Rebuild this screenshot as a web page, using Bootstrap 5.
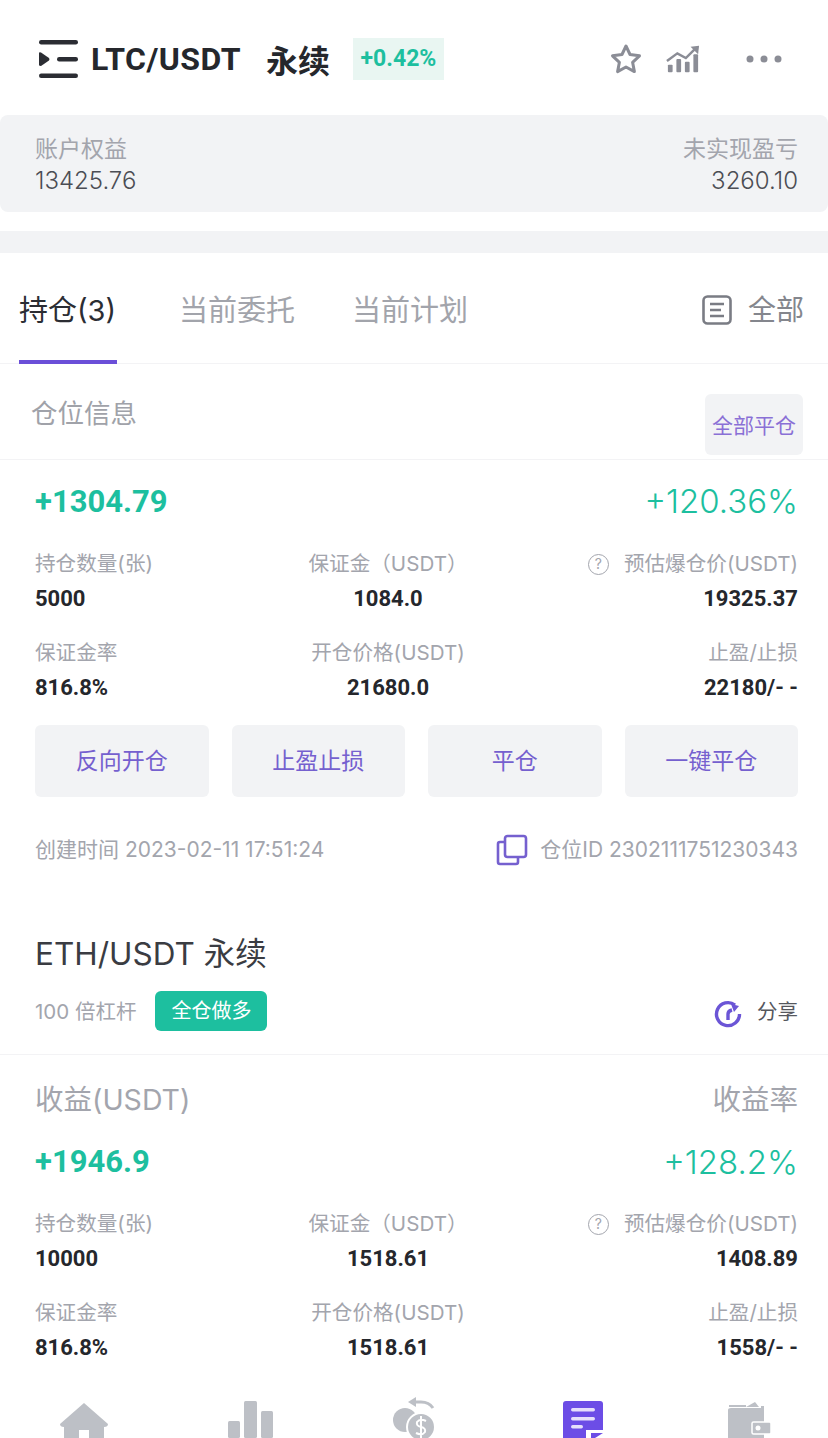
<!DOCTYPE html>
<html lang="zh-CN">
<head>
    <meta charset="UTF-8">
    <title>持仓 - LTC/USDT 永续</title>
    <link href="https://cdn.jsdelivr.net/npm/bootstrap@5.3.0/dist/css/bootstrap.min.css" rel="stylesheet">
    <style>
        html, body { height: 100%; overflow: hidden; }
        body { font-family: Inter, "Noto Sans CJK SC", sans-serif; background: #fff; color: #2b2d33; }
        .cjk { font-family: "Noto Sans CJK SC", sans-serif; }
        .top-bar { height: 115px; padding: 3px 46px 0 39px; }
        .pair-name { font-family: Roboto, "Noto Sans CJK SC", sans-serif; font-weight: 700; font-size: 32px; letter-spacing: .45px; color: #25272c; margin-left: 13px; white-space: nowrap; }
        .pair-type { font-weight: 700; font-size: 32px; color: #25272c; margin-left: 25px; }
        .pct-tag { background: #e9f6f2; color: #1dbf9f; font-family: Roboto, sans-serif; font-weight: 700; font-size: 23px; height: 42px; width: 91px; margin-left: 23px; }
        .top-icons { margin-left: auto; }
        .equity-box { height: 97px; background: #f2f3f5; border-radius: 8px; padding: 18px 30px 0 35px; }
        .equity-label { font-size: 23px; line-height: 32px; color: #a3a5ad; }
        .equity-val { font-size: 24px; line-height: 32px; color: #4b4d54; font-weight: 300; }
        .spacer-strip { height: 22px; margin-top: 19px; background: #f2f3f5; }
        .tab-row { height: 111px; border-bottom: 1px solid #f3f3f5; padding: 0 24px 0 19px; }
        .tab-item { font-size: 29px; color: #a2a4ab; height: 111px; line-height: 115px; white-space: nowrap; }
        .tab-item.on { color: #2b2d33; border-bottom: 4px solid #6b4fd8; width: 98px; }
        .tab-all { font-size: 28px; color: #84868d; margin-left: auto; padding-top: 3px; }
        .sec-head { height: 96px; border-bottom: 1px solid #f3f3f5; padding: 0 25px 0 31px; }
        .sec-title { font-size: 26.5px; color: #a0a2a9; line-height: 98px; }
        .close-all { width: 98px; height: 61px; margin-top: 30px; background: #f2f3f5; border-radius: 6px; border: 0; padding: 2px 0 0; font-size: 21px; line-height: 59px; color: #8a70d6; white-space: nowrap; }
        .pos-body { padding: 0 30px 0 35px; }
        .pnl-row { height: 86px; padding-bottom: 2px; }
        .pnl-row.second-pnl { height: 67px; padding-bottom: 20px; }
        .pnl-val { font-family: Roboto, sans-serif; font-weight: 700; font-size: 31px; color: #1dbf9f; }
        .pnl-pct { font-size: 33px; font-weight: 300; color: #1dbf9f; }
        .data-grid { display: grid; grid-template-columns: 236px 234px 1fr; }
        .data-cell { height: 89px; }
        .data-label { font-size: 20.6px; line-height: 36px; color: #a3a5ad; white-space: nowrap; }
        .data-val { font-family: Roboto, sans-serif; font-weight: 700; font-size: 22px; line-height: 34px; color: #25272c; }
        .hint-mark { display: inline-block; width: 21px; height: 21px; border: 1.5px solid #a3a5ad; border-radius: 50%; font-size: 14px; line-height: 18px; text-align: center; margin-right: 15px; vertical-align: 2px; }
        .act-row { gap: 23px; margin-top: 1px; }
        .act-btn { flex: 1 1 0; height: 72px; background: #f2f3f5; border: 0; border-radius: 6px; color: #7560cf; font-size: 23px; padding: 0; }
        .time-row { height: 105px; font-size: 21px; color: #a3a5ad; white-space: nowrap; }
        .eth-head { padding: 0 30px 0 35px; height: 153px; border-bottom: 1px solid #f3f3f5; }
        .eth-title { font-size: 31.5px; line-height: 40px; color: #3a3c42; padding-top: 32px; height: 72px; }
        .lever-row { margin-top: 17px; height: 40px; }
        .lever-text { font-size: 20.5px; color: #a3a5ad; padding-top: 2px; }
        .dir-tag { background: #1dbf9f; color: #fff; font-size: 20px; width: 112px; height: 40px; border-radius: 6px; margin-left: 19px; }
        .share-box { padding-top: 5px; }
        .share-text { font-size: 20.5px; color: #55575d; margin-left: 15px; margin-top: -3px; }
        .earn-head { height: 84px; padding-top: 6px; font-size: 28.5px; color: #a3a5ad; }
        .bottom-nav { position: fixed; left: 0; right: 0; top: 1396px; height: 42px; overflow: hidden; background: #fff; padding-left: 4px; }
        .nav-cell { flex: 1 1 0; }
    </style>
</head>
<body>
<!-- 顶部 -->
<div class="top-bar d-flex align-items-center">
    <svg width="39" height="38" viewBox="0 0 39 38"><rect x="0" y="0" width="39" height="4.5" rx="2.2" fill="#2b2d33"/><rect x="18" y="17" width="21" height="4.5" rx="2.2" fill="#2b2d33"/><rect x="0" y="33.5" width="39" height="4.5" rx="2.2" fill="#2b2d33"/><path d="M0 13 L0 25 Q0 26 2 26 L10 20.5 Q11 19 10 18 L2 12.5 Q0 12 0 13Z" fill="#2b2d33"/></svg>
    <span class="pair-name">LTC/USDT</span>
    <span class="pair-type cjk">永续</span>
    <span class="pct-tag d-flex align-items-center justify-content-center">+0.42%</span>
    <div class="top-icons d-flex align-items-center">
        <svg width="32" height="32" viewBox="0 0 32 32" fill="none" stroke="#8b8d96" stroke-width="3" stroke-linejoin="round"><path d="M16 3 L20 11.5 L29.5 12.8 L22.6 19.3 L24.4 28.6 L16 24 L7.6 28.6 L9.4 19.3 L2.5 12.8 L12 11.5Z"/></svg>
        <svg class="ms-4" width="34" height="28" viewBox="0 0 36 28" fill="#8b8d96"><rect x="2" y="20" width="5" height="8" rx="1"/><rect x="11" y="14" width="5" height="14" rx="1"/><rect x="20" y="17" width="5" height="11" rx="1"/><rect x="29" y="9" width="5" height="19" rx="1"/><path d="M1 16 L12 8 L21 13 L30 4" fill="none" stroke="#8b8d96" stroke-width="2.6"/><path d="M26 1 L35 0 L34 9Z"/></svg>
        <svg style="margin-left:46px" width="36" height="8" viewBox="0 0 36 8" fill="#8b8d96"><circle cx="4" cy="4" r="3.5"/><circle cx="18" cy="4" r="3.5"/><circle cx="32" cy="4" r="3.5"/></svg>
    </div>
</div>

<!-- 账户 -->
<div class="equity-box d-flex justify-content-between">
    <div>
        <div class="equity-label">账户权益</div>
        <div class="equity-val">13425.76</div>
    </div>
    <div class="text-end">
        <div class="equity-label">未实现盈亏</div>
        <div class="equity-val">3260.10</div>
    </div>
</div>
<div class="spacer-strip"></div>

<!-- tab -->
<div class="tab-row d-flex">
    <div class="tab-item on">持仓(3)</div>
    <div class="tab-item" style="margin-left:62px">当前委托</div>
    <div class="tab-item" style="margin-left:57px">当前计划</div>
    <div class="tab-all d-flex align-items-center">
        <svg class="me-3" width="30" height="30" viewBox="0 0 30 30" fill="none" stroke="#7a7c84" stroke-width="2.6"><rect x="1.5" y="1.5" width="27" height="27" rx="4"/><path d="M8 9 H22 M8 15 H19 M8 21 H22"/></svg>
        全部
    </div>
</div>

<div class="sec-head d-flex justify-content-between">
    <div class="sec-title">仓位信息</div>
    <button class="close-all">全部平仓</button>
</div>

<!-- 仓位1 -->
<div class="pos-body">
    <div class="pnl-row d-flex justify-content-between align-items-center">
        <span class="pnl-val">+1304.79</span>
        <span class="pnl-pct">+120.36%</span>
    </div>
    <div class="data-grid">
        <div class="data-cell"><div class="data-label">持仓数量(张)</div><div class="data-val">5000</div></div>
        <div class="data-cell text-center"><div class="data-label">保证金（USDT）</div><div class="data-val">1084.0</div></div>
        <div class="data-cell text-end"><div class="data-label"><span class="hint-mark">?</span>预估爆仓价(USDT)</div><div class="data-val">19325.37</div></div>
        <div class="data-cell"><div class="data-label">保证金率</div><div class="data-val">816.8%</div></div>
        <div class="data-cell text-center"><div class="data-label">开仓价格(USDT)</div><div class="data-val">21680.0</div></div>
        <div class="data-cell text-end"><div class="data-label">止盈/止损</div><div class="data-val">22180/- -</div></div>
    </div>
    <div class="act-row d-flex">
        <button class="act-btn">反向开仓</button>
        <button class="act-btn">止盈止损</button>
        <button class="act-btn">平仓</button>
        <button class="act-btn">一键平仓</button>
    </div>
    <div class="time-row d-flex justify-content-between align-items-center">
        <span>创建时间 2023-02-11 17:51:24</span>
        <span class="d-flex align-items-center">
            <svg class="me-2" width="32" height="32" viewBox="0 0 32 32" fill="none" stroke="#7560cf" stroke-width="2.6"><rect x="9" y="2" width="21" height="21" rx="2.5"/><path d="M9 8 H4 Q2 8 2 10 V28 Q2 30 4 30 H20 Q22 30 22 28 V23"/></svg>
            <span class="ms-1">仓位ID 2302111751230343</span>
        </span>
    </div>
</div>

<!-- 仓位2 -->
<div class="eth-head">
    <div class="eth-title">ETH/USDT 永续</div>
    <div class="lever-row d-flex align-items-center">
        <span class="lever-text">100 倍杠杆</span>
        <span class="dir-tag d-flex align-items-center justify-content-center">全仓做多</span>
        <span class="share-box ms-auto d-flex align-items-center">
            <svg width="28" height="28" viewBox="0 0 28 28" fill="none" stroke="#6b55d6" stroke-width="3.4"><path d="M21 5 A11.5 11.5 0 1 0 25.5 14"/><path d="M14 20 V14 Q14 11 18 10"/><path d="M17 4 L25 6 L20 12Z" fill="#6b55d6" stroke="none"/></svg>
            <span class="share-text">分享</span>
        </span>
    </div>
</div>
<div class="pos-body">
    <div class="earn-head d-flex justify-content-between align-items-center">
        <span>收益(USDT)</span>
        <span>收益率</span>
    </div>
    <div class="pnl-row second-pnl d-flex justify-content-between align-items-center">
        <span class="pnl-val">+1946.9</span>
        <span class="pnl-pct">+128.2%</span>
    </div>
    <div class="data-grid">
        <div class="data-cell"><div class="data-label">持仓数量(张)</div><div class="data-val">10000</div></div>
        <div class="data-cell text-center"><div class="data-label">保证金（USDT）</div><div class="data-val">1518.61</div></div>
        <div class="data-cell text-end"><div class="data-label"><span class="hint-mark">?</span>预估爆仓价(USDT)</div><div class="data-val">1408.89</div></div>
        <div class="data-cell"><div class="data-label">保证金率</div><div class="data-val">816.8%</div></div>
        <div class="data-cell text-center"><div class="data-label">开仓价格(USDT)</div><div class="data-val">1518.61</div></div>
        <div class="data-cell text-end"><div class="data-label">止盈/止损</div><div class="data-val">1558/- -</div></div>
    </div>
</div>

<!-- 底部导航 -->
<div class="bottom-nav d-flex">
    <div class="nav-cell text-center"><svg class="me-1" width="50" height="42" viewBox="0 0 50 42" fill="#bdc0c6"><path d="M25 7 L49 28 Q49 31 45 31 V42 H30 V34 H20 V42 H5 V31 Q1 31 1 28Z"/></svg></div>
    <div class="nav-cell text-center"><svg width="46" height="42" viewBox="0 0 46 42" fill="#bdc0c6"><rect x="0" y="25" width="12" height="17" rx="1.5"/><rect x="16" y="5" width="13" height="37" rx="1.5"/><rect x="33" y="15" width="12" height="27" rx="1.5"/></svg></div>
    <div class="nav-cell text-center"><svg class="me-1" width="46" height="42" viewBox="0 0 46 42"><path d="M20 6 H30 Q38 6 42 12" fill="none" stroke="#bdc0c6" stroke-width="3"/><path d="M25 1 L17 6 L25 11Z" fill="#bdc0c6"/><circle cx="14" cy="24" r="12" fill="#bdc0c6"/><circle cx="30" cy="31" r="14" fill="#bdc0c6" stroke="#fff" stroke-width="2"/><path d="M35 25 Q29 22 26 26 Q25 30 30 31 Q35 32 34 36 Q31 40 25 37 M30 20 V42" fill="none" stroke="#fff" stroke-width="2"/></svg></div>
    <div class="nav-cell text-center"><svg class="ms-1" width="42" height="42" viewBox="0 0 42 42"><path d="M4 5 H38 Q41 5 41 8 V42 H1 V8 Q1 5 4 5Z" fill="#6c4de6"/><rect x="9" y="12" width="24" height="3.5" rx="1.7" fill="#e6dffb"/><rect x="9" y="21" width="24" height="3.5" rx="1.7" fill="#e6dffb"/><rect x="9" y="29" width="12" height="3.5" rx="1.7" fill="#e6dffb"/><path d="M24 34 H42 V42 H24Z" fill="#fff"/><path d="M29 37 H41 L33 42 H29Z" fill="#6c4de6"/></svg></div>
    <div class="nav-cell text-center"><svg class="ms-2" width="44" height="42" viewBox="0 0 44 42" fill="#bdc0c6"><path d="M0 14 Q0 12 3 12 H36 V42 H0Z"/><rect x="1" y="9" width="17" height="2"/><path d="M18 11 L27 6 L31 11Z"/><rect x="33" y="10" width="3" height="2"/><rect x="24" y="26" width="19" height="12" rx="1.5" stroke="#fff" stroke-width="1.5"/><circle cx="30" cy="32" r="2.5" fill="#fff"/></svg></div>
</div>
</body>
</html>
